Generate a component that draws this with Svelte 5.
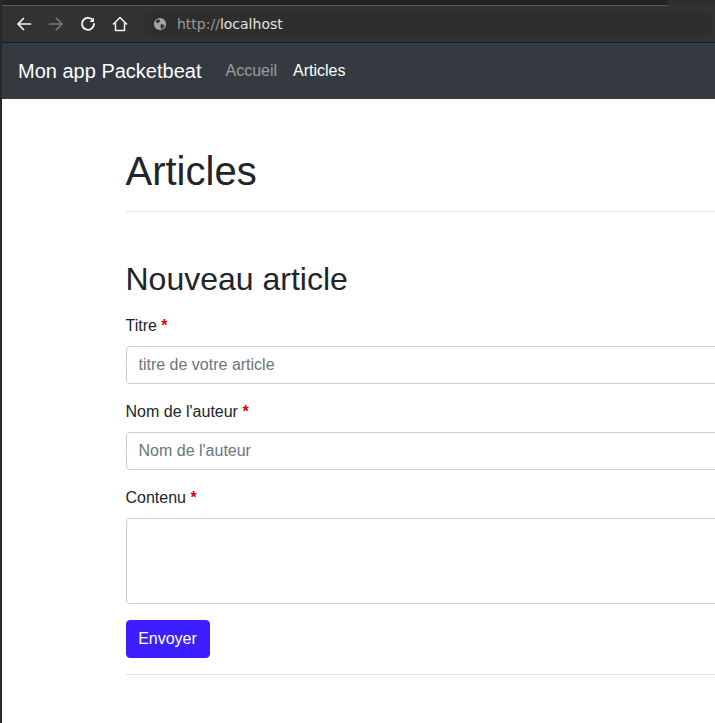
<script lang="ts">
	let title = $state('');
	let author = $state('');
	let content = $state('');
</script>

<div class="window">
	<div class="chrome">
		<div class="tabstrip"><div class="tabline"></div></div>
		<div class="toolbar">
			<svg class="tool" viewBox="0 0 16 16" fill="none" stroke="#f2f2f2" stroke-width="1.7" stroke-linecap="round" stroke-linejoin="round">
				<path d="M14.5 8H2M7.5 2.5 2 8l5.500 5.500" />
			</svg>
			<svg class="tool" viewBox="0 0 16 16" fill="none" stroke="#777" stroke-width="1.7" stroke-linecap="round" stroke-linejoin="round">
				<path d="M1.500 8H14M8.500 2.500 14 8l-5.500 5.500" />
			</svg>
			<svg class="tool" viewBox="0 0 16 16" fill="none" stroke="#f2f2f2" stroke-width="1.9" stroke-linecap="round">
				<path d="M13 4.500A6 6 0 1 0 14 8" />
				<path d="M14 1.500V6H9.500" fill="#f2f2f2" stroke="none" />
			</svg>
			<svg class="tool" viewBox="0 0 16 16" fill="none" stroke="#f2f2f2" stroke-width="1.500" stroke-linejoin="round">
				<path d="M1 8.500 8 1.500l7 7M3.500 7v7.500h9V7" />
			</svg>
			<div class="urlbar">
				<svg class="globe" viewBox="0 0 16 16">
					<circle cx="8" cy="8" r="7" fill="#a4a4a4" />
					<path d="M5 2.500 8 3.500 7.500 6 5 7 3 5.500ZM9 8l4 1-1 3.500-2.500 1.500L8.500 11Z" fill="#333" />
				</svg>
				<span class="scheme">http://</span><span class="host">localhost</span>
			</div>
		</div>
	</div>

	<nav class="navbar">
		<a class="brand" href="#top">Mon app Packetbeat</a>
		<a class="nav-link" href="#top">Accueil</a>
		<a class="nav-link active" href="#top">Articles</a>
	</nav>

	<main>
		<h1>Articles</h1>
		<hr class="first" />
		<h2>Nouveau article</h2>
		<form onsubmit={(e) => e.preventDefault()}>
			<div class="field">
				<label for="titre">Titre <span class="req">*</span></label>
				<input id="titre" type="text" placeholder="titre de votre article" bind:value={title} />
			</div>
			<div class="field">
				<label for="auteur">Nom de l'auteur <span class="req">*</span></label>
				<input id="auteur" type="text" placeholder="Nom de l'auteur" bind:value={author} />
			</div>
			<div class="field">
				<label for="contenu">Contenu <span class="req">*</span></label>
				<textarea id="contenu" bind:value={content}></textarea>
			</div>
			<button type="submit">Envoyer</button>
		</form>
		<hr class="last" />
	</main>
</div>

<style>
	:global(body) {
		margin: 0;
		background: #fff;
	}

	.window {
		height: 723px;
		overflow: hidden;
		border-left: 2px solid #26282a;
		font-family: 'Liberation Sans', Arial, sans-serif;
		font-size: 16px;
		line-height: 24px;
		color: #212529;
	}

	.chrome {
		margin-left: -2px;
		height: 43px;
		background: #323232;
		border-bottom: 1px solid #17191b;
		box-sizing: border-box;
	}

	.tabstrip {
		height: 5px;
		background: #2f2f2f;
	}

	.tabline {
		width: 668px;
		height: 1px;
		padding-top: 4px;
		border-bottom: 1px solid #585858;
		background: #232323;
	}

	.toolbar {
		display: flex;
		align-items: center;
		height: 37px;
		padding-left: 16px;
		gap: 16px;
	}

	.tool {
		width: 16px;
		height: 16px;
		flex: none;
	}

	.urlbar {
		display: flex;
		align-items: center;
		flex: 1;
		height: 26px;
		margin-right: 2px;
		padding-left: 9px;
		border-radius: 13px;
		background: #2e2e2e;
		font-family: 'DejaVu Sans', sans-serif;
		font-size: 14px;
	}

	.globe {
		width: 14px;
		height: 14px;
		margin-right: 10px;
	}

	.scheme {
		color: #9a9a9a;
	}

	.host {
		color: #e4e4e4;
	}

	.navbar {
		display: flex;
		align-items: center;
		height: 56px;
		padding-left: 16px;
		background: #343a40;
		box-shadow: inset 0 1px 0 #323f3f;
	}

	.navbar a {
		text-decoration: none;
	}

	.brand {
		margin-right: 16px;
		color: #fff;
		font-size: 20px;
	}

	.nav-link {
		padding: 0 8px;
		color: rgba(255, 255, 255, 0.5);
	}

	.nav-link.active {
		color: #fff;
	}

	main {
		width: 800px;
		margin-left: 123.5px;
		padding-top: 48px;
	}

	h1 {
		margin: 0;
		font-size: 40px;
		font-weight: 500;
		line-height: 48px;
	}

	h2 {
		margin: 0 0 16px;
		font-size: 32px;
		font-weight: 500;
		line-height: 38px;
	}

	hr {
		margin: 0;
		border: 0;
		border-top: 1px solid #e2e3e4;
	}

	hr.first {
		margin: 16px 0 48px;
	}

	hr.last {
		margin-top: 16px;
	}

	.field {
		margin-bottom: 16px;
	}

	label {
		display: block;
		margin-bottom: 8px;
	}

	.req {
		color: #d0021b;
		font-weight: 700;
	}

	input,
	textarea {
		display: block;
		width: 100%;
		box-sizing: border-box;
		padding: 6px 12px;
		border: 1px solid #cbcdd0;
		border-radius: 4px;
		background: #fff;
		color: #495057;
		font: inherit;
	}

	input {
		height: 38px;
	}

	textarea {
		height: 86px;
		resize: vertical;
	}

	input::placeholder {
		color: #6c757d;
	}

	button {
		display: block;
		height: 38px;
		width: 84px;
		padding: 6px 0;
		border: 1px solid #3c1fff;
		border-radius: 4px;
		background: #3c1fff;
		color: #fff;
		font: inherit;
	}
</style>
